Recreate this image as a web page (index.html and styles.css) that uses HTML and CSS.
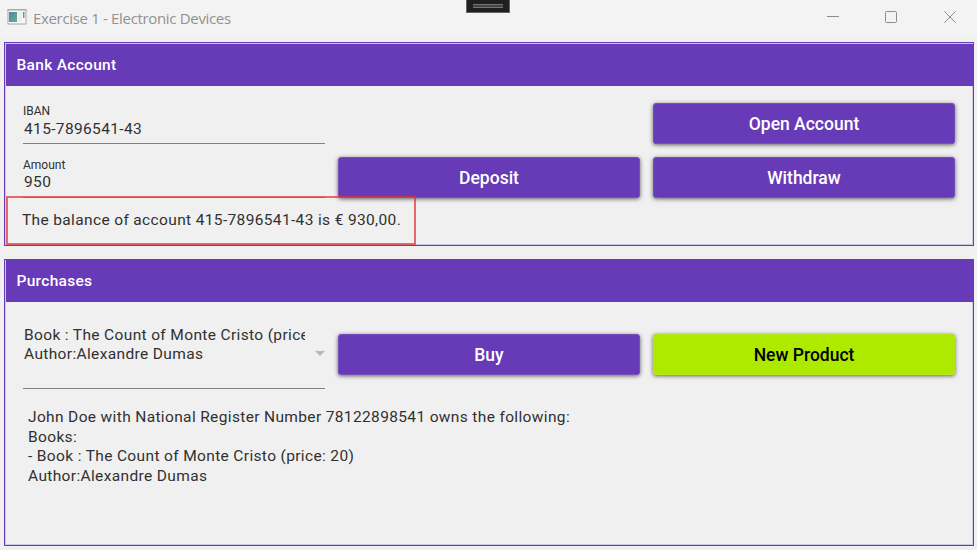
FILE: index.html
```html
<!DOCTYPE html>
<html lang="en">
<head>
<meta charset="utf-8">
<title>Exercise 1 - Electronic Devices</title>
<link rel="stylesheet" href="styles.css">
</head>
<body>
<div class="window">
  <header class="titlebar">
    <svg class="app-icon" width="20" height="16" viewBox="0 0 20 16">
      <defs><linearGradient id="g" x1="0" y1="0" x2="1" y2="1"><stop offset="0" stop-color="#4f86a8"/><stop offset="1" stop-color="#62b083"/></linearGradient></defs>
      <rect x="1" y=".5" width="18" height="14.5" fill="#f8f8f8" stroke="#a6a8aa"/>
      <path d="M.5 1h19" stroke="#a6a8aa"/>
      <rect x="2" y="3" width="8" height="10" fill="url(#g)"/>
      <rect x="11" y="3" width="4" height="10" fill="#eeeeee"/>
      <rect x="16" y="3" width="1.5" height="6" fill="url(#g)"/>
    </svg>
    <h1 class="title">Exercise 1 - Electronic Devices</h1>
    <div class="controls">
      <svg width="12" height="12" viewBox="0 0 12 12"><path d="M1 5.5h12"/></svg>
      <svg width="12" height="12" viewBox="0 0 12 12"><rect x=".5" y=".5" width="11" height="11" rx="1"/></svg>
      <svg width="12" height="12" viewBox="0 0 12 12"><path d="M.3 .3l11.4 11.4M11.7 .3L.3 11.7"/></svg>
    </div>
    <div class="grip"><span></span></div>
  </header>

  <section class="panel account">
    <h2 class="panel-head">Bank Account</h2>
    <div class="panel-body">
      <label class="field iban"><span class="label">IBAN</span><span class="value">415-7896541-43</span></label>
      <button class="btn open">Open Account</button>
      <label class="field"><span class="label">Amount</span><span class="value">950</span></label>
      <button class="btn">Deposit</button>
      <button class="btn">Withdraw</button>
    </div>
    <p class="balance">The balance of account 415-7896541-43 is € 930,00.</p>
    <div class="highlight"></div>
  </section>

  <section class="panel purchases">
    <h2 class="panel-head">Purchases</h2>
    <div class="panel-body">
      <div class="select">
        <div class="selected">Book : The Count of Monte Cristo (price: 20)<br>Author:Alexandre Dumas</div>
        <svg width="10" height="5" viewBox="0 0 10 5"><path d="M0 0h10L5 5z"/></svg>
      </div>
      <button class="btn">Buy</button>
      <button class="btn lime">New Product</button>
    </div>
    <p class="summary">John Doe with National Register Number 78122898541 owns the following:<br>Books:<br>- Book : The Count of Monte Cristo (price: 20)<br>Author:Alexandre Dumas</p>
  </section>
</div>
</body>
</html>
```
FILE: styles.css
```css
* { box-sizing: border-box; }
body { margin: 0; background: #f0f0f0; }
h1, h2, p { margin: 0; }
.window {
  height: 550px;
  padding: 0 3px 0 4px;
  overflow: hidden;
  font: 15.5px/19.5px Roboto, sans-serif;
  letter-spacing: .355px;
  color: #303030;
}
.titlebar {
  position: relative;
  height: 36px;
  margin: 0 -3px 6px -4px;
  padding: 0 21px 0 7px;
  display: flex;
  align-items: center;
  background: #f3f3f3;
}
.app-icon { margin-top: -2px; }
.title {
  margin: -1px 0 0 6px;
  font: 400 15px/20px "Open Sans", sans-serif;
  letter-spacing: -.33px;
  color: #919191;
}
.controls { margin: -2px 0 0 auto; display: flex; gap: 47px; }
.controls svg { fill: none; stroke: #8e8e8e; overflow: visible; }
.grip {
  position: absolute;
  left: 466px;
  top: 0;
  width: 44px;
  height: 13px;
  padding: 4px 6px;
  background: #1f1f1f;
  border: 1px solid #666;
  border-top: 0;
}
.grip span { display: block; height: 4px; border: solid #747474; border-width: 1px 0; background: #444; }
.panel { position: relative; border: 1px solid #673ab7; box-shadow: inset 0 0 0 1px #d1c4e9; }
.account { height: 204px; margin-bottom: 13px; }
.purchases { height: 287px; }
.panel-head {
  height: 42px;
  margin: 1px 0 0 1px;
  padding-left: 10.5px;
  background: #673ab7;
  color: #fff;
  font: 500 15.5px/42px Roboto, sans-serif;
  letter-spacing: .3px;
}
.purchases .panel-head { margin-top: 0; }
.panel-body {
  display: grid;
  grid-template-columns: repeat(3, 302px);
  column-gap: 13px;
  padding-left: 18px;
}
.account .panel-body { grid-template-rows: 41px 41px; row-gap: 13px; padding-top: 17px; }
.purchases .panel-body { padding-top: 23px; grid-template-rows: 64px; }
.field { display: flex; flex-direction: column; border-bottom: 1px solid #808080; }
.label { padding-top: 1px; font-size: 12px; line-height: 14px; letter-spacing: 0; }
.value { padding: 1px 0 0 1px; }
.iban .value { padding-top: 2px; }
.open { grid-column: 3; }
.btn {
  height: 41px;
  padding: 0;
  border: 1px solid #7850be;
  border-radius: 3px;
  background: #673ab7;
  color: #fff;
  font: 500 17.5px/38px Roboto, sans-serif;
  box-shadow: 0 1px 4px rgba(0, 0, 0, .6);
}
.purchases .btn { margin-top: 9px; }
.btn.lime { background: #aeea00; border-color: #b2e81c; color: #000; }
.balance { padding: 13px 0 0 17px; }
.highlight {
  position: absolute;
  left: 1px;
  top: 153px;
  width: 410px;
  height: 49px;
  border: 2px solid rgba(230, 50, 55, .72);
}
.select { position: relative; border-bottom: 1px solid #808080; }
.selected { width: 282px; padding: 1px 0 0 1px; line-height: 19px; overflow: hidden; white-space: nowrap; }
.select svg { position: absolute; right: 0; top: 26px; fill: #b8b8b8; }
.summary { padding: 19px 0 0 23px; }
```
